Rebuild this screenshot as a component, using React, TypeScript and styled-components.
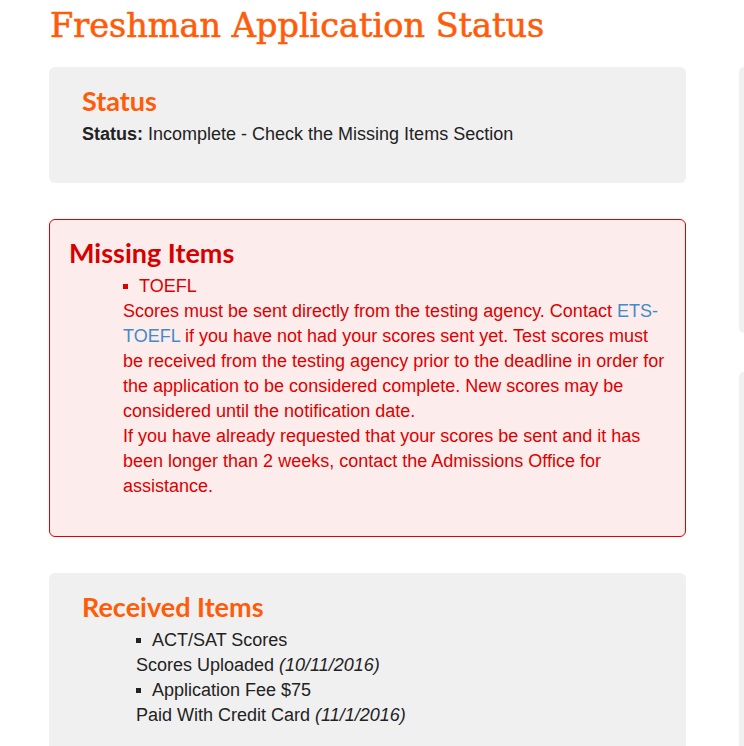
import React from "react";
import styled, { createGlobalStyle } from "styled-components";

const GlobalStyle = createGlobalStyle`
  html, body {
    margin: 0;
    padding: 0;
    background: #ffffff;
    overflow: hidden;
  }
  body {
    font-family: "Liberation Sans", Arial, sans-serif;
    font-size: 18px;
    color: #222222;
  }
`;

const Page = styled.div`
  display: flex;
  align-items: flex-start;
  gap: 53px;
  padding: 0 0 0 49px;
  width: 744px;
  height: 746px;
  box-sizing: border-box;
  overflow: hidden;
`;

const Main = styled.main`
  flex: 0 0 637px;
  display: flex;
  flex-direction: column;
  gap: 36px;
`;

const Title = styled.h1`
  margin: 3px 0 -18px 1px;
  font-family: "DejaVu Serif", "Liberation Serif", serif;
  font-weight: 400;
  font-size: 33.5px;
  line-height: 46px;
  color: #ff5c0a;
  -webkit-text-stroke: 0.6px #ff5c0a;
  white-space: nowrap;
`;

const Card = styled.section<{ $alert?: boolean }>`
  border-radius: 6px;
  background: ${(p) => (p.$alert ? "#fdecec" : "#f0f0f0")};
  border: ${(p) => (p.$alert ? "1px solid #e00000" : "none")};
  padding: ${(p) => (p.$alert ? "17px 19px 37px 19px" : "18px 33px 36px 33px")};
`;

const Heading = styled.h2<{ $alert?: boolean }>`
  margin: 0 0 5px 0;
  font-family: Lato, "Open Sans", sans-serif;
  font-weight: 700;
  font-size: 27px;
  line-height: 32px;
  color: ${(p) => (p.$alert ? "#d60000" : "#ff5c0a")};
`;

const Text = styled.p`
  margin: 0;
  line-height: 25px;
`;

const Label = styled.strong`
  font-weight: 700;
`;

const List = styled.ul<{ $color: string }>`
  list-style: none;
  margin: 0;
  padding: 0 0 0 54px;
  color: ${(p) => p.$color};
  line-height: 25px;
`;

const Item = styled.li``;

const Bullet = styled.span<{ $color: string }>`
  display: inline-block;
  width: 5px;
  height: 5px;
  background: ${(p) => p.$color};
  vertical-align: 3px;
  margin: 0 11px 0 0;
`;

const Note = styled.div`
  line-height: 25px;
`;

const Link = styled.a`
  color: #428bca;
  text-decoration: none;
`;

const Date = styled.em`
  font-style: italic;
`;

const Sidebar = styled.aside`
  flex: 1 1 auto;
  min-width: 0;
  display: flex;
  flex-direction: column;
  gap: 39px;
  padding-top: 67px;
`;

const SidePanel = styled.div<{ $h: number }>`
  height: ${(p) => p.$h}px;
  background: #f0f0f0;
  border-radius: 6px 0 0 6px;
`;

export default function App() {
  return (
    <>
      <GlobalStyle />
      <Page>
        <Main>
          <Title>Freshman Application Status</Title>

          <Card>
            <Heading>Status</Heading>
            <Text>
              <Label>Status:</Label> Incomplete - Check the Missing Items Section
            </Text>
          </Card>

          <Card $alert>
            <Heading $alert>Missing Items</Heading>
            <List $color="#dd0000">
              <Item>
                <Bullet $color="#dd0000" />
                TOEFL
                <Note>
                  Scores must be sent directly from the testing agency. Contact{" "}
                  <Link href="#">ETS-TOEFL</Link> if you have not had your scores sent
                  yet. Test scores must be received from the testing agency prior to the
                  deadline in order for the application to be considered complete. New
                  scores may be considered until the notification date.
                  <br />
                  If you have already requested that your scores be sent and it has been
                  longer than 2 weeks, contact the Admissions Office for assistance.
                </Note>
              </Item>
            </List>
          </Card>

          <Card>
            <Heading>Received Items</Heading>
            <List $color="#222222">
              <Item>
                <Bullet $color="#222222" />
                ACT/SAT Scores
                <Note>
                  Scores Uploaded <Date>(10/11/2016)</Date>
                </Note>
              </Item>
              <Item>
                <Bullet $color="#222222" />
                Application Fee $75
                <Note>
                  Paid With Credit Card <Date>(11/1/2016)</Date>
                </Note>
              </Item>
            </List>
          </Card>
        </Main>

        <Sidebar>
          <SidePanel $h={266} />
          <SidePanel $h={500} />
        </Sidebar>
      </Page>
    </>
  );
}
